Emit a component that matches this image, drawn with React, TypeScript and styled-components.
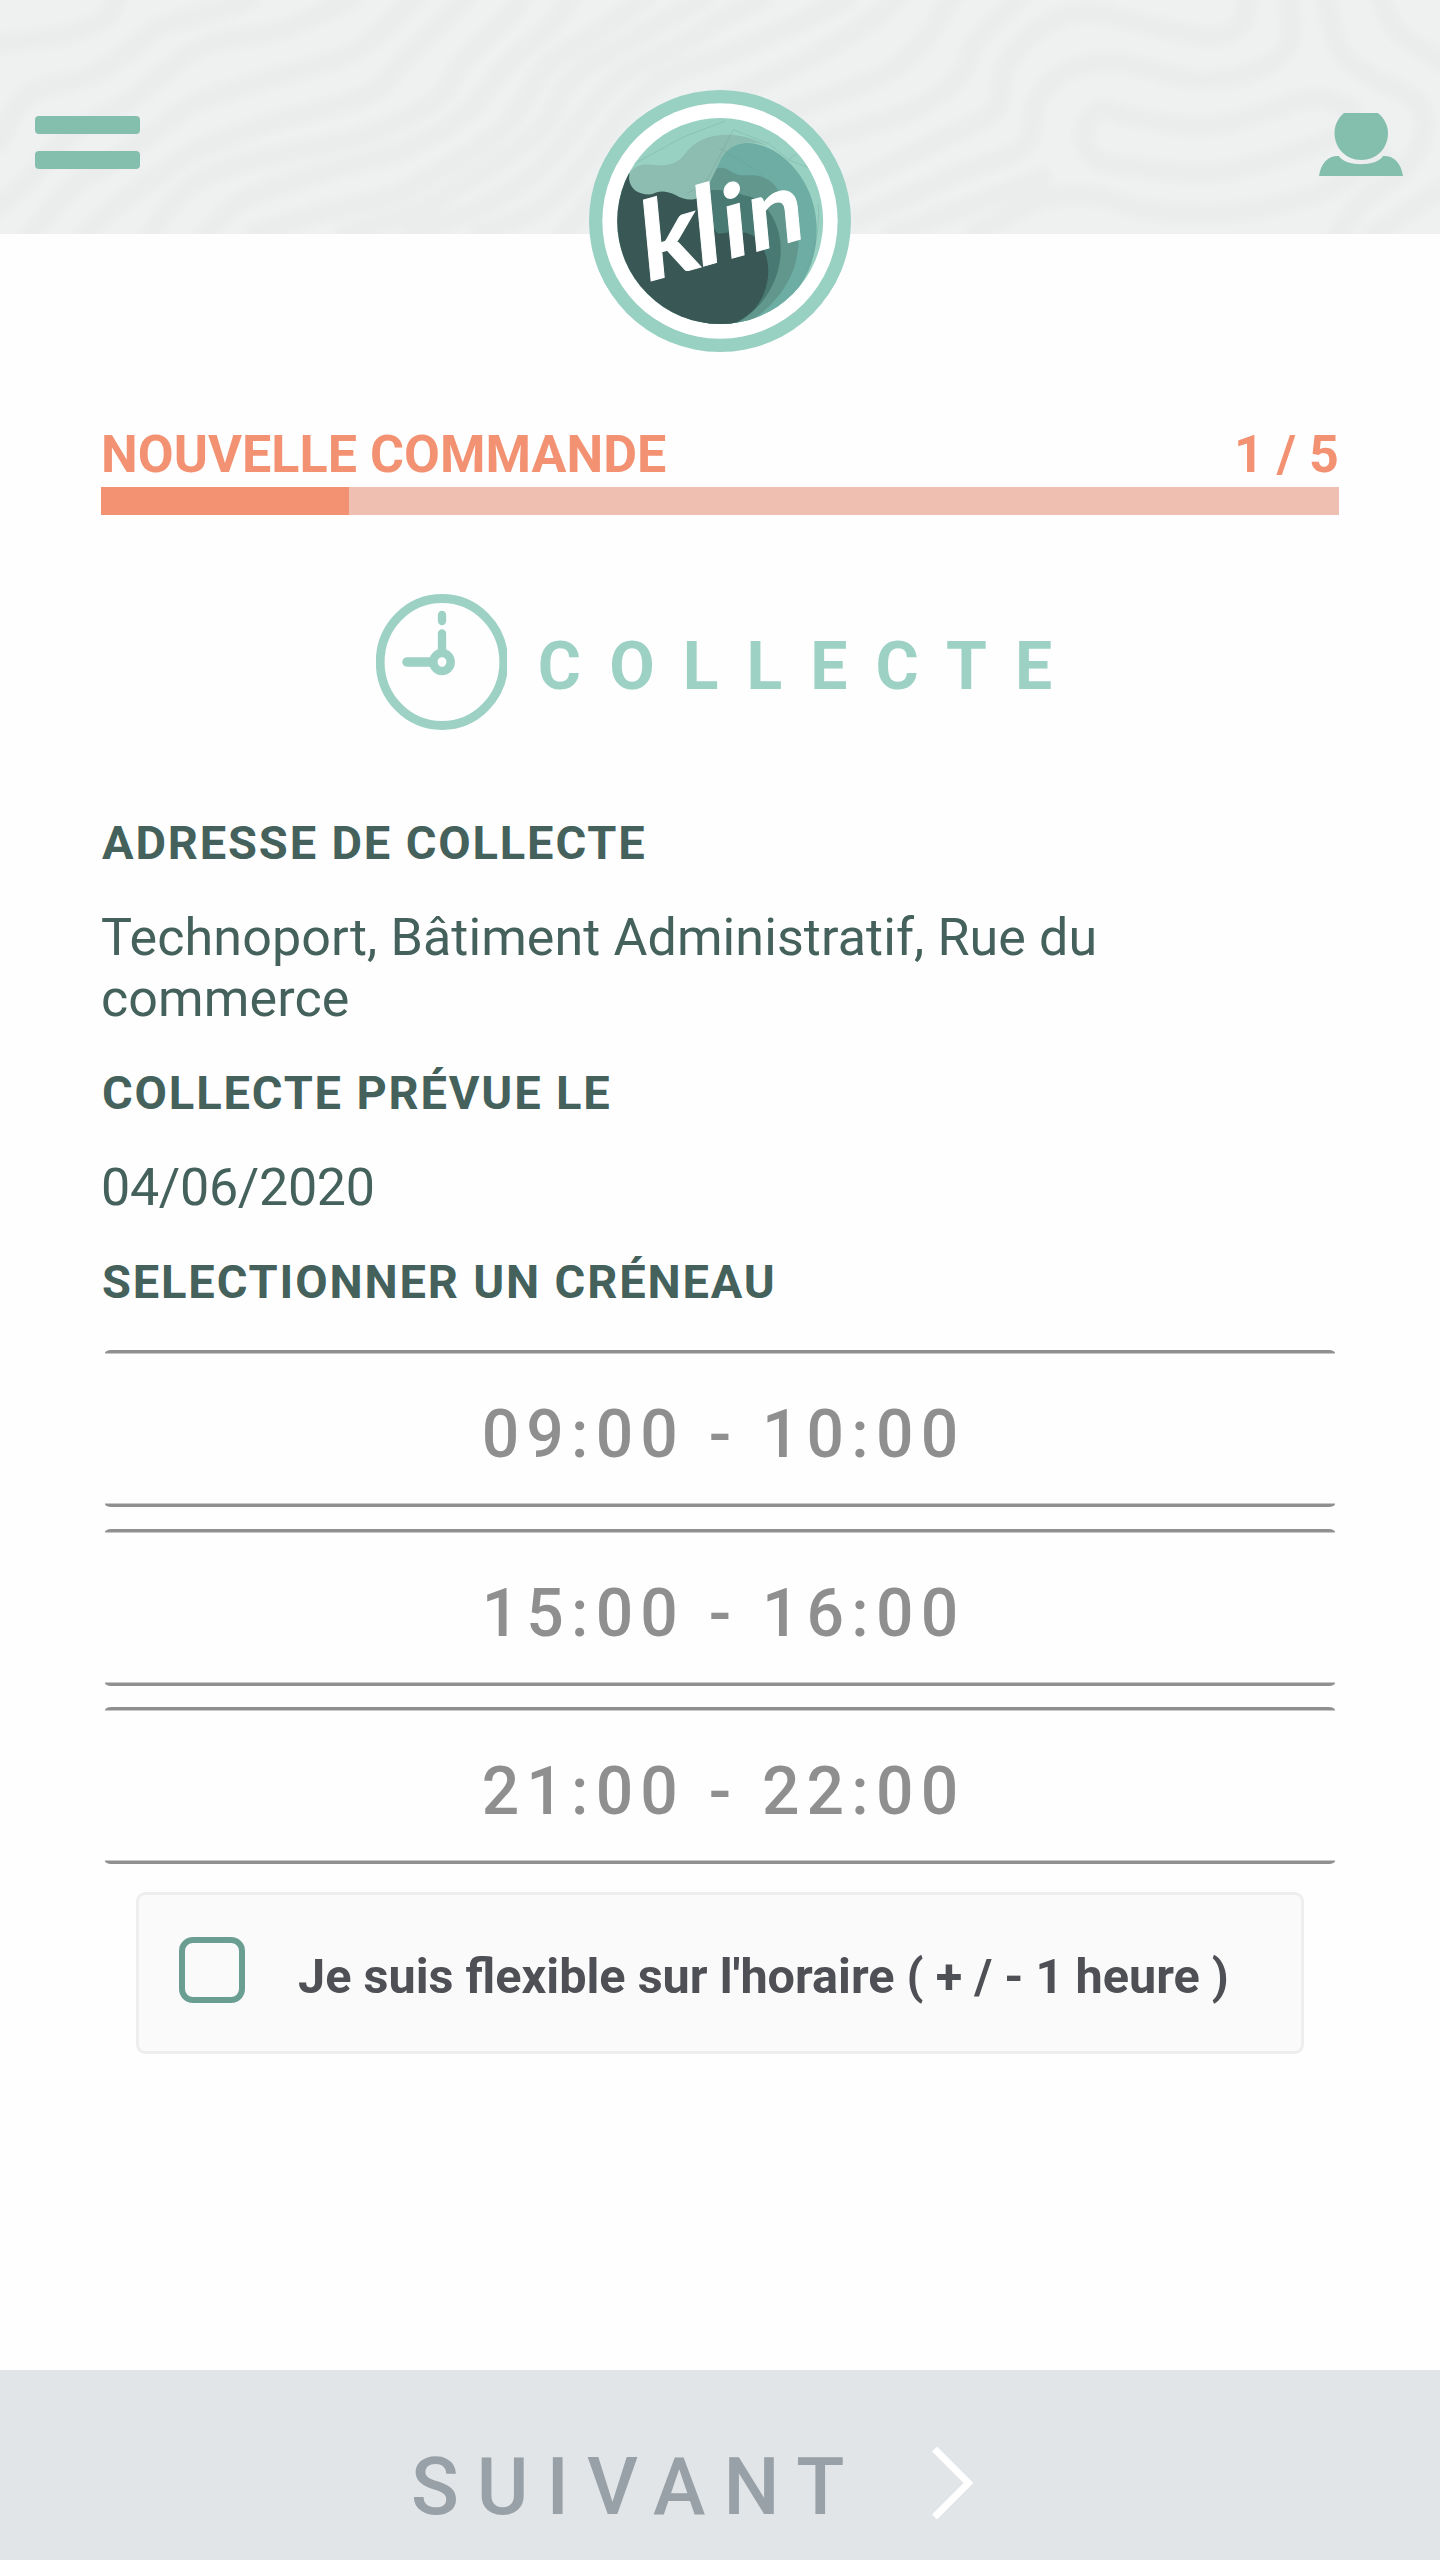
import React, { useState } from 'react';
import styled, { createGlobalStyle } from 'styled-components';

const GlobalStyle = createGlobalStyle`
  * {
    box-sizing: border-box;
  }

  body {
    margin: 0;
    background: #fefefe;
    font-family: Roboto, 'Liberation Sans', sans-serif;
  }
`;

const Screen = styled.div`
  display: flex;
  flex-direction: column;
  width: 1440px;
  height: 2560px;
  background: #fefefe;
  overflow: hidden;
`;

const Header = styled.header`
  position: relative;
  display: flex;
  flex: none;
  justify-content: space-between;
  align-items: flex-start;
  height: 234px;
  padding: 113px 37px 0 35px;
  background: #eff1f1;
`;

const Waves = styled.svg`
  position: absolute;
  inset: 0;
`;

const LogoBadge = styled.svg`
  position: absolute;
  top: 90px;
  left: 589px;
`;

const MenuButton = styled.button`
  position: relative;
  display: flex;
  flex-direction: column;
  gap: 17px;
  margin-top: 3px;
  padding: 0;
  border: 0;
  background: none;
`;

const MenuBar = styled.span`
  width: 105px;
  height: 18px;
  border-radius: 4px;
  background: #84bfad;
`;

const ProfileButton = styled.button`
  position: relative;
  display: flex;
  padding: 0;
  border: 0;
  background: none;
`;

const Content = styled.main`
  display: flex;
  flex: 1;
  flex-direction: column;
  padding: 189px 101px 0;
`;

const ProgressHeader = styled.div`
  display: flex;
  justify-content: space-between;
  height: 64px;
  color: #f29272;
  font-size: 52px;
  font-weight: 700;
  letter-spacing: 0.05px;
  line-height: 63px;
`;

const ProgressTrack = styled.div`
  height: 28px;
  background: #efbfb1;
`;

const ProgressFill = styled.div`
  height: 100%;
  background: #f29272;
`;

const StepTitle = styled.h1`
  display: flex;
  align-items: center;
  justify-content: center;
  gap: 31px;
  margin: 78px 0 0;
  padding-left: 16px;
  height: 138px;
  color: #9dd1c4;
  font-size: 66px;
  font-weight: 700;
  letter-spacing: 28.1px;
  line-height: 78px;
`;

const StepName = styled.span`
  padding-top: 9px;
`;

const Details = styled.section`
  margin-top: 84px;
  padding-left: 1px;
`;

const Label = styled.h2`
  margin: 0;
  color: #44615c;
  font-size: 47px;
  font-weight: 700;
  letter-spacing: 1.85px;
  line-height: 56px;
`;

const Value = styled.p<{ $tracking: number }>`
  margin: 36px 0 36px -1px;
  color: #44615c;
  font-size: 52px;
  letter-spacing: ${props => props.$tracking}px;
  line-height: 61px;
`;

const SlotList = styled.div`
  display: flex;
  flex-direction: column;
  gap: 21.5px;
  margin-top: 40px;
  padding: 0 4px;
`;

const Slot = styled.button`
  height: 157px;
  padding: 12px 0 0 7px;
  border: 0 solid #8f8f8f;
  border-width: 3px 0;
  border-radius: 6px / 3px;
  background: none;
  box-shadow: inset 0 1px #c8c8c8, inset 0 -1px #c8c8c8;
  color: #8f8f8f;
  font-family: inherit;
  font-size: 66px;
  font-weight: 500;
  letter-spacing: 7.2px;
`;

const FlexibleCard = styled.button`
  display: flex;
  align-items: center;
  height: 162px;
  margin: 28px 35px 0;
  padding: 0 0 0 40px;
  border: 3px solid #eeeeee;
  border-radius: 9px;
  background: #fafafa;
  color: #4e5055;
  font-family: inherit;
  font-size: 48.6px;
  font-weight: 700;
  text-align: left;
`;

const CheckMark = styled.span<{ $checked: boolean }>`
  flex: none;
  width: 66px;
  height: 66px;
  margin: 0 53px 6px 0;
  border: 6px solid #6b9e93;
  border-radius: 14px;
  background: ${props => (props.$checked ? '#6b9e93' : 'transparent')};
`;

const CardText = styled.span`
  padding-top: 7px;
  white-space: nowrap;
`;

const NextButton = styled.button`
  display: flex;
  flex: none;
  align-items: flex-start;
  height: 190px;
  padding: 71px 0 0 411px;
  border: 0;
  background: #e1e5e8;
  color: #98a1a8;
  font-family: inherit;
  font-size: 79px;
  font-weight: 500;
  letter-spacing: 18px;
  line-height: 93px;
`;

const NextChevron = styled.svg`
  margin: 6px 0 0 70px;
`;

type Point = [number, number];

// Contour lines of the header background, from left to right
const contours: Point[][] = [
  [[0, 43], [64, 35], [105, 18], [115, 0]],
  [[0, 140], [28, 95], [92, 75], [133, 48], [160, 27], [230, 7], [248, 0]],
  [[0, 205], [28, 180], [69, 135], [128, 102], [161, 75], [207, 45], [285, 29], [349, 0]],
  [[32, 233], [69, 190], [115, 160], [161, 127], [197, 102], [275, 77], [354, 52], [413, 0]],
  [[87, 233], [115, 207], [152, 180], [197, 150], [275, 122], [367, 95], [404, 60], [464, 0]],
  [[152, 233], [175, 200], [216, 172], [300, 150], [367, 135], [436, 100], [464, 60], [510, 15], [519, 0]],
  [[207, 233], [243, 200], [321, 173], [404, 150], [464, 115], [505, 67], [551, 25], [569, 0]],
  [[257, 233], [321, 213], [390, 197], [436, 173], [505, 127], [546, 67], [597, 33], [643, 0]],
  [[349, 233], [413, 213], [459, 187], [537, 133], [574, 77], [643, 33], [700, 0]],
  [[413, 233], [482, 207], [542, 167], [583, 117], [620, 77], [689, 40], [720, 20], [760, 0]],
  [[482, 233], [542, 207], [588, 160], [620, 117], [666, 77], [720, 57], [789, 27], [844, 0]],
  [[565, 233], [600, 190], [640, 140], [743, 90], [812, 57], [872, 20], [895, 0]],
  [[789, 110], [880, 77], [922, 43], [950, 0]],
  [[821, 140], [913, 110], [959, 77], [977, 40], [1018, 0]],
  [[844, 187], [940, 140], [995, 110], [1005, 67], [1041, 27], [1087, 13], [1142, 23], [1207, 37], [1239, 27], [1248, 0]],
  [[862, 217], [950, 177], [1023, 147], [1037, 100], [1069, 70], [1119, 63], [1197, 80], [1257, 70], [1289, 43], [1289, 0]],
  [[1350, 108], [1315, 98], [1262, 113], [1202, 127], [1133, 117], [1100, 110], [1083, 135], [1098, 160], [1133, 167], [1207, 173], [1271, 160], [1330, 140]],
  [[894, 233], [972, 205], [1041, 178]],
  [[977, 233], [1032, 203], [1087, 195], [1147, 210], [1225, 213], [1308, 197], [1344, 180], [1380, 155]],
  [[1326, 0], [1340, 50], [1372, 77], [1418, 103], [1422, 140], [1400, 173], [1363, 200], [1340, 233]],
  [[1381, 0], [1399, 33], [1440, 60]],
  [[1376, 233], [1440, 190]],
];

// Smooth curve through all the points
const toPath = (points: Point[]) => {
  let d = `M${points[0][0]} ${points[0][1]}`;
  for (let i = 0; i < points.length - 1; i++) {
    const a = points[i - 1] || points[i];
    const b = points[i];
    const c = points[i + 1];
    const e = points[i + 2] || c;
    d += ` C${b[0] + (c[0] - a[0]) / 6} ${b[1] + (c[1] - a[1]) / 6}`;
    d += ` ${c[0] - (e[0] - b[0]) / 6} ${c[1] - (e[1] - b[1]) / 6} ${c[0]} ${c[1]}`;
  }
  return d;
};

const HeaderWaves = () => (
  <Waves width="1440" height="234" viewBox="0 0 1440 234" fill="none">
    <defs>
      <filter id="soften" x="0" y="0" width="1440" height="234" filterUnits="userSpaceOnUse">
        <feGaussianBlur stdDeviation="3.5" />
      </filter>
    </defs>
    <g stroke="#ebeded" strokeWidth="21" strokeLinecap="square" filter="url(#soften)">
      {contours.map((points, i) => (
        <path key={i} d={toPath(points)} />
      ))}
    </g>
  </Waves>
);

const Logo = () => (
  <LogoBadge width="262" height="262" viewBox="57 59 786 786">
    <defs>
      <clipPath id="disc">
        <circle cx="450.5" cy="452" r="309" />
      </clipPath>
    </defs>
    <circle cx="450" cy="452" r="393" fill="#98d0c1" />
    <circle cx="450" cy="452" r="353" fill="#ffffff" />
    <g clipPath="url(#disc)">
      <rect x="140" y="140" width="622" height="624" fill="#98d1c2" />
      <path d="M400 400C425 320 440 222 530 217C640 222 738 340 740 470C742 600 680 690 560 764H400Z" fill="#6dada3" />
      <path d="M400 330C430 290 450 285 478 300C500 318 520 315 550 315C590 318 615 340 626 364C665 395 686 460 685 525C680 620 620 710 520 764H400Z" fill="#62978e" />
      <path d="M400 360C440 358 490 360 520 375C570 380 600 420 615 455C655 540 630 690 490 764H400Z" fill="#487a73" />
      <path d="M130 290L180 310L400 372C420 430 425 478 445 490C480 486 520 478 550 497C585 530 598 570 594 620C585 690 550 735 480 764H130Z" fill="#395754" />
      <path d="M177 325C175 295 205 280 245 283C290 288 320 285 345 250C375 210 420 192 475 193C515 194 550 205 590 225C530 205 480 220 455 262C435 305 425 325 405 365C385 395 345 392 318 375C285 358 265 362 245 372C205 375 180 355 177 325Z" fill="#8dbcb0" />
      <g fill="none" stroke="#6c9d92" strokeWidth="1.5" opacity="0.6">
        <path d="M180 287L340 200L465 152" />
        <path d="M350 370L405 340L490 178L600 222L655 268L680 250" />
        <path d="M447 232L560 300L615 350" />
        <path d="M655 268L735 300" />
        <path d="M745 400C750 470 735 560 705 600" />
      </g>
    </g>
    <text
      x="-24 139 229 307"
      y="0"
      transform="matrix(0.963 -0.271 0.095 0.995 247 631)"
      fill="#ffffff"
      stroke="#ffffff"
      strokeWidth="3"
      fontFamily="Lato, sans-serif"
      fontSize="328"
      fontWeight="700"
    >
      kl<tspan fontSize="302">in</tspan>
    </text>
  </LogoBadge>
);

const ProfileIcon = () => (
  <svg width="84" height="63" viewBox="0 0 84 63" fill="#84bfad">
    <path d="M25 0H59C65 5 69 12 69 20C69 35 58 47 42 47C27 47 15.500 35 15.500 20C15.500 12 19 5 25 0Z" />
    <path d="M0 63C2 50 9 42.500 20 43C26 54 58 54 64 43C75 42.500 82 50 84 63Z" />
  </svg>
);

const ClockIcon = () => (
  <svg width="131" height="136" viewBox="0 0 131 136" fill="none" stroke="#9dd1c4">
    <ellipse cx="66" cy="68" rx="61.800" ry="63.500" strokeWidth="8.800" />
    <ellipse cx="66" cy="68" rx="8.700" ry="9" strokeWidth="8.500" />
    <path d="M66 21V27M66 39.500V57" strokeWidth="8.300" strokeLinecap="round" />
    <path d="M31 68H56" strokeWidth="9.500" strokeLinecap="round" />
  </svg>
);

const slots = ['09:00 - 10:00', '15:00 - 16:00', '21:00 - 22:00'];

const App: React.FC = () => {
  const [flexible, setFlexible] = useState(false);
  const step = 1;
  const steps = 5;

  return (
    <>
      <GlobalStyle />
      <Screen>
        <Header>
          <HeaderWaves />
          <MenuButton aria-label="Menu">
            <MenuBar />
            <MenuBar />
          </MenuButton>
          <Logo />
          <ProfileButton aria-label="Profil">
            <ProfileIcon />
          </ProfileButton>
        </Header>

        <Content>
          <ProgressHeader>
            <span>NOUVELLE COMMANDE</span>
            <span>{step} / {steps}</span>
          </ProgressHeader>
          <ProgressTrack>
            <ProgressFill style={{ width: `${(step / steps) * 100}%` }} />
          </ProgressTrack>

          <StepTitle>
            <ClockIcon />
            <StepName>COLLECTE</StepName>
          </StepTitle>

          <Details>
            <Label>ADRESSE DE COLLECTE</Label>
            <Value $tracking={0.1}>Technoport, Bâtiment Administratif, Rue du commerce</Value>
            <Label>COLLECTE PRÉVUE LE</Label>
            <Value $tracking={-0.3}>04/06/2020</Value>
            <Label>SELECTIONNER UN CRÉNEAU</Label>
          </Details>

          <SlotList>
            {slots.map(slot => (
              <Slot key={slot}>{slot}</Slot>
            ))}
          </SlotList>

          <FlexibleCard onClick={() => setFlexible(!flexible)}>
            <CheckMark $checked={flexible} />
            <CardText>Je suis flexible sur l'horaire ( + / - 1 heure )</CardText>
          </FlexibleCard>
        </Content>

        <NextButton>
          SUIVANT
          <NextChevron width="42" height="72" viewBox="0 0 42 72" fill="none" stroke="#ffffff" strokeWidth="7">
            <path d="M2.500 2L36.500 36L2.500 70" />
          </NextChevron>
        </NextButton>
      </Screen>
    </>
  );
};

export default App;
